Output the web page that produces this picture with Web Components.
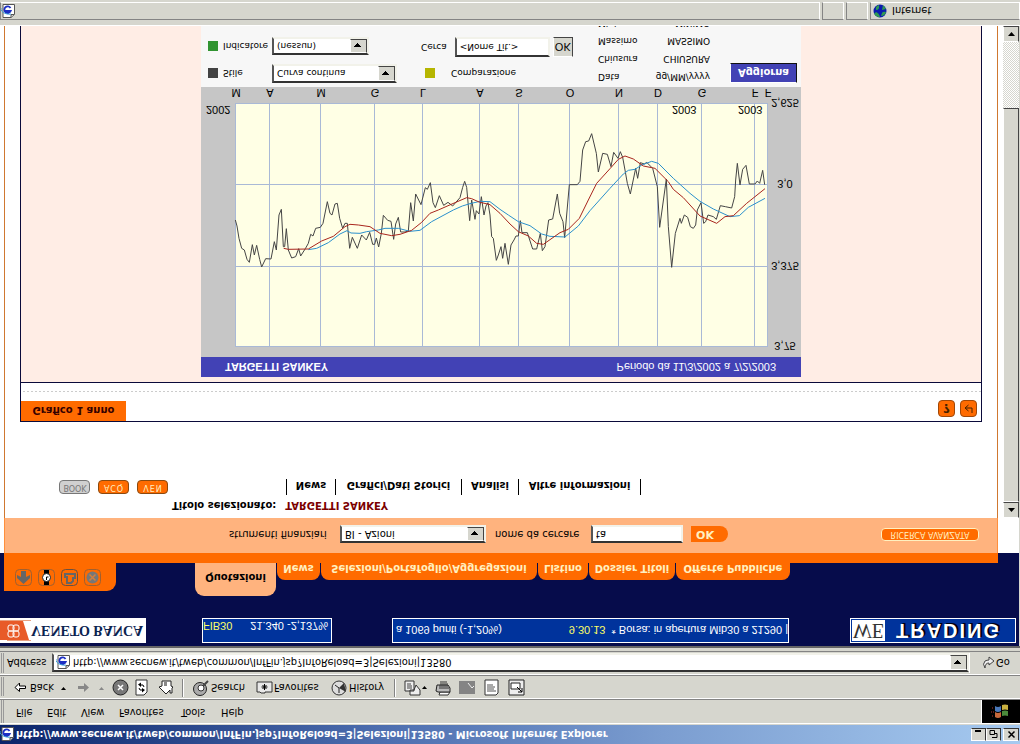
<!DOCTYPE html>
<html lang="it">
<head>
<meta charset="utf-8">
<title>InfFin - Microsoft Internet Explorer</title>
<style>
html,body{margin:0;height:100%}
body{background:#d6d6ce}
</style>
</head>
<body>
<browser-window></browser-window>
<script>
const base = `
*{box-sizing:border-box}
a{color:inherit;text-decoration:none}
button,input,select{font:inherit;color:inherit;margin:0;border-radius:0;outline:0}
`;
const fields = `
.sel{position:relative;display:block}
.sel select,.box{appearance:none;display:block;width:100%;height:100%;padding:0 3px;background:#fff;color:#000;border:2px solid;border-color:#848484 #f2f2ea #f2f2ea #848484;border-top-color:#333;border-left-color:#555}
.sel::after{content:"";position:absolute;right:2px;top:2px;bottom:2px;width:15px;border:1px solid;border-color:#fff #444 #444 #fff;background:linear-gradient(#000,#000) 3px 5px/7px 1px no-repeat,linear-gradient(#000,#000) 4px 6px/5px 1px no-repeat,linear-gradient(#000,#000) 5px 7px/3px 1px no-repeat,linear-gradient(#000,#000) 6px 8px/1px 1px no-repeat,#d6d6ce;pointer-events:none}
`;
function define(name, css, html){
  const t = document.createElement('template');
  t.innerHTML = `<style>${base}${css}</style>${html}`;
  customElements.define(name, class extends HTMLElement{
    constructor(){ super(); this.attachShadow({mode:'open'}).append(t.content.cloneNode(true)); }
  });
}

define('ie-page-icon', `:host{display:block;width:14px;height:14px}svg{display:block}`,
`<svg width="14" height="14" viewBox="0 0 14 14" aria-hidden="true"><path d="M2 .5h8l3.500 3v10h-11.500z" fill="#fff" stroke="#555"/><path d="M10 .5v3h3" fill="#ccc" stroke="#555"/><path d="M9.500 10a3.300 3.300 0 1 1 .2-3H3.500" fill="none" stroke="#1c2fc4" stroke-width="1.800"/><path d="M0 10C-1 5 8 3 10 4" fill="none" stroke="#3aa0d8"/></svg>`);

define('title-bar', `
:host{display:flex;align-items:center;height:19px;background:linear-gradient(90deg,#0a246a,#4e6fb0 38%,#7b9dd0 65%,#a6caf0);color:#fff;font:bold 11px "DejaVu Sans Condensed","DejaVu Sans",sans-serif;gap:2px;padding-right:1px}
h1{font:inherit;margin:0;flex:1;white-space:nowrap}
button{width:15px;height:13px;padding:0;background:#d6d6ce;border:1px solid;border-color:#fff #333 #333 #fff;display:grid;place-items:center}
button:last-child{width:16px}
.w{display:flex;gap:0}.w button:last-child{margin-left:2px}`,
`<ie-page-icon></ie-page-icon><h1>http://www.secnew.it/tweb/common/InfFin.jsp?InfoReload=3|Selezioni|13580 - Microsoft Internet Explorer</h1>
<div class="w"><button aria-label="Riduci"><svg width="9" height="9"><path d="M1 8h6" stroke="#000" stroke-width="2"/></svg></button><button aria-label="Ripristina"><svg width="9" height="9"><path d="M3 1.500h5v4h-2M1 4.500h4.500v4H1z" fill="none" stroke="#000"/></svg></button><button aria-label="Chiudi"><svg width="9" height="9"><path d="M1.500 1.500l6 6M7.500 1.500l-6 6" stroke="#000" stroke-width="1.500"/></svg></button></div>`);

define('menu-bar', `
:host{display:flex;height:25px;margin-top:1px;border-top:1px solid #fff;border-bottom:1px solid #848484;align-items:stretch}
nav{display:flex;flex:1;align-items:center;border-left:3px double #999;margin-left:1px;padding:0 0 2px 12px}
a{display:block}
.logo{width:39px;background:#000;border-left:1px solid #fff;display:grid;place-items:center}`,
`<nav><a href="#" style="width:31px">File</a><a href="#" style="width:34px">Edit</a><a href="#" style="width:38px">View</a><a href="#" style="width:62px">Favorites</a><a href="#" style="width:40px">Tools</a><a href="#">Help</a></nav>
<div class="logo"><svg width="22" height="18" viewBox="0 0 22 18" aria-hidden="true"><path d="M2 4h2M1 8h3M2 12h2" stroke="#a33" stroke-dasharray="1 1"/><path d="M5 3q3-2 6 0v5q-3-2-6 0z" fill="#c8683c"/><path d="M12 4q3 1 6 0v5q-3 1-6 0z" fill="#4b8a3c"/><path d="M5 9q3-2 6 0v5q-3-2-6 0z" fill="#4a78b8"/><path d="M12 10q3 1 6 0v5q-3 1-6 0z" fill="#c8b040"/></svg></div>`);

define('tool-bar', `
:host{display:flex;height:24px;border-top:1px solid #fff;border-bottom:1px solid #848484;align-items:center}
.b{display:flex;flex:1;align-items:center;border-left:3px double #999;margin-left:1px;height:19px;padding:0 0 2px 9px}
button{border:0;background:none;padding:0;display:flex;align-items:center;gap:1px;text-align:left}
svg{display:block;flex:none}
i{width:2px;height:18px;border-left:1px solid #848484;border-right:1px solid #fff}`,
`<div class="b">
<button style="width:48px"><svg width="16" height="13"><path d="M2 6.500L6.500 2.500v3h6v2.500h-6v3z" fill="#fff" stroke="#000"/></svg>Back</button>
<svg width="16" height="6"><path d="M0 1h5l-2.500 3z"/></svg>
<button style="width:30px" aria-label="Forward"><svg width="14" height="13"><path d="M1 5h6V2l5 4.500L7 11V8H1z" fill="#888"/></svg><svg width="14" height="6"><path d="M7 1h5L9.500 4z" fill="#888"/></svg></button>
<button style="width:27px;justify-content:center" aria-label="Stop"><svg width="17" height="17"><circle cx="8.500" cy="8.500" r="7.500" fill="#777" stroke="#222"/><path d="M6 6l5 5M11 6l-5 5" stroke="#fff" stroke-width="1.500"/></svg></button>
<button style="width:24px" aria-label="Refresh"><svg width="15" height="17"><path d="M2 1h8l3 3v12H2z" fill="#fff" stroke="#333"/><path d="M5 8q0-3 4-2M10 9q0 3-4 2" fill="none" stroke="#000"/><path d="M8 3.500l3 2.500-3 2zM7 9l-3 2.500 3 2z"/></svg></button>
<button style="width:24px" aria-label="Home"><svg width="17" height="17"><path d="M1 9l7-7 4 4V3h2v5l1 1-2 1v5H4v-5z" fill="#fff" stroke="#222"/><path d="M6 10v5h3v-5z" fill="#888"/></svg></button>
<i></i>
<button style="width:64px;margin-left:8px"><svg width="18" height="18"><circle cx="8" cy="8" r="6.500" fill="#aaa" stroke="#222"/><circle cx="9" cy="9" r="3" fill="#fff" stroke="#333"/><path d="M11 11l5 5" stroke="#444" stroke-width="2"/></svg>Search</button>
<button style="width:75px"><svg width="17" height="15"><path d="M1 3h3l1-1h4v1h7v10H1z" fill="#e8e8e8" stroke="#333"/><path d="M8.500 5v6M5.500 8h6M6.500 6l4 4M10.500 6l-4 4" stroke="#000"/></svg>Favorites</button>
<button style="width:63px"><svg width="17" height="17"><circle cx="8" cy="8" r="7" fill="#ddd" stroke="#333"/><path d="M8 8l7-4-2 9z" fill="#333"/><path d="M8 3v5l-4 3" fill="none" stroke="#222"/></svg>History</button>
<i></i>
<button style="width:31px;margin-left:8px" aria-label="Mail"><svg width="17" height="17"><path d="M1 5h9v10H1zM6 1h10v5l-4 5-2-5H6z" fill="#eee" stroke="#333"/><path d="M3 8h5M3 10h5M3 12h4" stroke="#444"/></svg><svg width="6" height="5"><path d="M0 1h5L2.500 4z"/></svg></button>
<button style="width:24px" aria-label="Print"><svg width="17" height="17"><path d="M4 1h9l2 3H5z" fill="#fff" stroke="#333"/><path d="M1 5l2-1h12v4l-2 3H2z" fill="#bbb" stroke="#222"/><path d="M4 8h10M4 10h9M5 12h8M5 14h7" stroke="#333"/></svg></button>
<button style="width:25px" aria-label="Edit"><svg width="17" height="15"><path d="M0 1h16v13H0z" fill="#848484"/><path d="M9 12l4-5 2 2" stroke="#eee" fill="none"/></svg></button>
<button style="width:24px" aria-label="Discuss"><svg width="16" height="17"><path d="M1 1h11l2 2v13H1z" fill="#fff" stroke="#333"/><path d="M3 5h9M3 7h7M3 9h8M3 11h6" stroke="#555"/></svg></button>
<button aria-label="Messenger"><svg width="17" height="17"><path d="M1 1h15v15H1z" fill="#eee" stroke="#222"/><path d="M3 7h9v6H3z" fill="#fff" stroke="#222"/><path d="M9 9l5-5M14 8V4h-4" fill="none" stroke="#000"/></svg></button>
</div>`);

define('address-bar', fields + `
:host{display:flex;height:24px;border-top:1px solid #fff;border-bottom:1px solid #848484;align-items:center}
.g{display:flex;flex:1;align-items:center;border-left:3px double #999;margin-left:1px;height:20px;padding-left:3px}
label{width:45px}
.sel{flex:1;height:19px}
.sel select{padding-left:19px}
.ic{position:absolute;left:4px;top:3px;z-index:1}
button{width:51px;border:0;border-left:1px solid #fff;background:none;padding:0 0 0 11px;display:flex;align-items:center;gap:1px;height:20px}`,
`<div class="g"><label for="a">Address</label><span class="sel"><ie-page-icon class="ic"></ie-page-icon><select id="a"><option>http://www.secnew.it/tweb/common/InfFin.jsp?InfoReload=3|Selezioni|13580</option></select></span></div>
<button><svg width="14" height="15"><path d="M4 2Q1 6 4 9q2 1 4 1v3l5-4-5-4v2Q4 7 4 2z" fill="#eee" stroke="#444" transform="matrix(1 0 0 1 0 0)"/></svg>Go</button>`);

define('status-bar', `
:host{display:flex;height:26px;padding:5px 0 3px;gap:2px;border-top:1px solid #fff}
div{border:1px solid;border-color:#848484 #fff #fff #848484;height:18px}
.m{flex:1;display:flex;align-items:center}.s{width:22px}
.z{width:150px;display:flex;align-items:center;gap:5px;padding-left:2px}`,
`<div class="m"><ie-page-icon></ie-page-icon></div><div class="s"></div><div class="s"></div>
<div class="z"><svg width="14" height="14" viewBox="0 0 14 14" aria-hidden="true"><circle cx="7" cy="7" r="6.500" fill="#0a1cae"/><path d="M1 4q3-4 6-3-1 4-4 5zM8 2q4 0 5 4-3 1-4-1zM3 8q4 0 3 5-4-1-3-5zM9 8l4 1-3 4z" fill="#2f9a52"/></svg><span>Internet</span></div>`);

define('nav-tab', `
:host{display:block;width:var(--w);height:17px;background:#ff6b00;border-radius:8px 8px 0 0;color:#fff0c0;line-height:23px;text-align:center;white-space:nowrap}
:host([current]){height:33px;background:#ffb37e;color:#000;line-height:38px;border-radius:9px 9px 0 0}`,
`<a href="#"><slot></slot></a>`);

define('trading-header', fields + `
:host{display:block;background:#fff;margin-right:1px;font:10px "DejaVu Sans",sans-serif;color:#000}
.top{background:#060c4b;margin-bottom:-10px;padding:3px 3px 10px 0}
.row{display:flex;align-items:flex-start;font:11px "Liberation Sans",Arial,sans-serif;color:#fff}
.bank{width:146px;height:25px;background:#fff;display:flex;align-items:center;color:#0b2350;font:bold 14px "Liberation Serif",serif;white-space:nowrap}
.bank svg{flex:none}
.q{height:25px;border:1px solid #fff;background:#00339c;display:flex;white-space:nowrap;overflow:hidden}
.fib{width:130px;margin-left:56px;align-items:flex-end;justify-content:space-between;padding-right:3px;line-height:13px}
.tick{width:397px;margin-left:60px;align-items:center;padding-left:3px}
.y{color:#ff6}
.tick .y{margin:0 6px 0 auto}
.me{margin-left:auto;width:166px;height:25px;border:1px solid #fff;background:#00339c;display:flex;align-items:center;padding-left:1px;font:bold 20px "Liberation Sans",Arial,sans-serif;text-shadow:2px 1px #001}
.me b{background:#fff;color:#333;font:20px/21px "Liberation Serif",serif;width:33px;height:21px;text-shadow:none;text-align:center;white-space:nowrap;margin-right:11px}
.me span{letter-spacing:2px}
.tabs{display:flex;align-items:flex-end;height:33px;margin-top:22px;font:bold 10px "DejaVu Sans",sans-serif;gap:1px}
.tools{width:112px;height:28px;margin:0 78px 0 4px;background:#ff6b00;border-radius:0 9px 0 0;display:flex;gap:6px;padding:5px 11px}
.tools button{border:0;padding:0;background:none;height:17px}
svg{display:block}
.bar{height:10px;background:#ff6b00;margin:0 21px 0 4px;position:relative}
.search{height:35px;margin:0 21px 0 4px;border:solid #ff8f3c;border-width:0 1px;background:#ffb37e;display:flex;align-items:center;padding:2px 18px 0 224px}
.search label{white-space:nowrap}
.l1{width:111px}.s1{width:146px;height:18px}.l2{margin-left:9px;width:96px}.i2{width:92px;height:18px}
.ok{margin-left:8px;width:37px;height:16px;border:0;border-radius:0 8px 8px 0;background:#ff6b00;color:#fff0c0;font:bold 11px "DejaVu Sans",sans-serif;padding:0 9px 0 0}
.adv{margin-left:auto;width:98px;height:13px;border:1px solid #fff0c0;border-radius:4px;background:#ff6b00;color:#fff0c0;font:8px/11px "DejaVu Sans",sans-serif;text-align:center;white-space:nowrap}`,
`<div class="top"><div class="row">
<div class="bank"><svg width="31" height="25" viewBox="0 0 31 25" aria-hidden="true"><path d="M7 2h24v1H7zM0 22h31v1H0z" fill="#e8a080"/><path d="M0 22V3h29l-6 19z" fill="#e85a28"/><g fill="none" stroke="#fff"><rect x="8" y="6" width="6" height="6" rx="2"/><rect x="13" y="6" width="6" height="6" rx="2"/><rect x="8" y="12" width="6" height="6" rx="2"/><rect x="13" y="12" width="6" height="6" rx="2"/></g></svg><span>VENETO BANCA</span></div>
<div class="q fib"><span class="y">FIB30</span><span>21.340 -2,137%</span></div>
<div class="q tick"><span>a 1069 punti (-1,20%)</span><span class="y">9.30.13</span><span>* Borsa: in apertura Mib30 a 21290 |</span></div>
<div class="me"><b>WE</b><span>TRADING</span></div></div>
<div class="tabs"><div class="tools">
<button aria-label="Scarica"><svg width="17" height="17"><rect x=".5" y=".5" width="16" height="16" rx="4" fill="none" stroke="#a06030"/><path d="M8.500 2L2 8v3l4-2v6h5V9l4 2V8z" fill="#666"/></svg></button>
<button aria-label="Orologio"><svg width="17" height="17"><rect x=".5" y=".5" width="16" height="16" rx="4" fill="none" stroke="#a06030"/><path d="M6 1h5v15H6z"/><circle cx="8.500" cy="8.500" r="4" fill="#fff" stroke="#222"/><path d="M8.500 6v3h2" fill="none" stroke="#000"/></svg></button>
<button aria-label="Stampa"><svg width="17" height="17"><rect x=".5" y=".5" width="16" height="16" rx="4" fill="none" stroke="#6b5040"/><path d="M6 3h4l2 2v3h2v4H4V9h2z" fill="none" stroke="#666" stroke-width="2"/></svg></button>
<button aria-label="Chiudi"><svg width="17" height="17"><rect x=".5" y=".5" width="16" height="16" rx="4" fill="none" stroke="#a06030"/><circle cx="8.500" cy="8.500" r="6" fill="#777"/><path d="M5.500 5.500l6 6M11.500 5.500l-6 6" stroke="#d08040" stroke-width="1.500"/></svg></button>
</div><nav-tab current style="--w:81px">Quotazioni</nav-tab><nav-tab style="--w:43px">News</nav-tab><nav-tab style="--w:216px">Selezioni/Portafoglio/Aggregazioni</nav-tab><nav-tab style="--w:50px">Listino</nav-tab><nav-tab style="--w:86px">Dossier Titoli</nav-tab><nav-tab style="--w:114px">Offerte Pubbliche</nav-tab></div></div>
<div class="bar"></div>
<div class="search"><label class="l1" for="t">strumenti finanziari</label><span class="sel s1"><select id="t"><option>BI - Azioni</option></select></span><label class="l2" for="n">nome da cercare</label><input class="box i2" id="n" value="ta"><button class="ok">OK</button><a class="adv" href="#">RICERCA AVANZATA</a></div>`);

define('scroll-bar', `
:host{display:flex;flex-direction:column;width:16px;background:repeating-conic-gradient(#fff 0 25%,#d6d6ce 0 50%) 0 0/2px 2px;flex:none}
button,div{border:1px solid;border-color:#fff #444 #444 #fff;background:#d6d6ce;padding:0;display:grid;place-items:center}
button{height:16px}div{height:80%}
.d{margin-top:auto}svg{display:block}`,
`<button aria-label="Su"><svg width="7" height="4"><path d="M3.500 0L7 4H0z"/></svg></button><div></div><button class="d" aria-label="Giu"><svg width="7" height="4"><path d="M0 0h7L3.500 4z"/></svg></button>`);

const months = [[34,'M'],[68,'A'],[119,'M'],[173,'G'],[221,'L'],[278,'A'],[317,'S'],[368,'O'],[417,'N'],[456,'D'],[500,'G'],[553,'F'],[566,'F']];
define('price-chart', `
:host{display:block;width:600px;font-weight:400}
.h{display:flex;justify-content:space-between;height:20px;padding:0 25px 0 24px;background:#4242b5;color:#fff;line-height:20px}
.h,svg{font-family:"Liberation Sans",Arial,sans-serif;font-size:11px}
svg{display:block;background:#c6c6c6}
polyline{fill:none;stroke-width:3}`,
`<div class="h"><b>TARGETTI SANKEY</b><span>Periodo da 11/3/2002 a 7/2/2003</span></div>
<svg width="600" height="270" viewBox="0 0 600 270">
<rect x="34.500" y="10.500" width="532" height="243" fill="#ffffe5" stroke="#a9b9d6"/>
<path d="M34 90.500h532M34 172.500h532${months.slice(1,-1).map(m=>`M${m[0]+.5} 11v242`).join('')}" stroke="#a9b9d6" fill="none"/>
<g transform="matrix(.33333 0 0 -.33333 24 257)">
<polyline stroke="#444" points="31,360 36,378 42,415 50,445 58,450 66,478 73,487 82,434 88,465 95,436 104,478 110,501 122,476 138,477 148,425 154,450 162,345 169,328 175,440 179,440 184,386 190,450 200,474 212,470 221,446 227,468 241,446 250,430 257,403 264,408 272,385 286,382 294,370 307,305 315,340 321,345 330,312 337,310 344,355 353,385 360,370 367,370 374,445 382,412 397,445 410,405 424,420 434,397 443,433 449,433 454,414 461,441 469,400 475,346 488,361 498,364 506,418 512,372 520,352 527,396 540,396 550,393 557,308 565,363 572,282 588,314 601,263 607,268 616,248 624,308 631,323 643,287 656,316 669,307 683,318 705,293 713,262 719,244 725,262 734,362 740,300 750,358 754,332 762,342 769,290 777,345 783,318 789,308 795,345 800,410 805,415 814,481 820,465 828,440 833,475 840,430 850,493 858,435 867,420 873,408 880,408 886,362 891,398 907,398 923,447 935,447 946,400 952,452 960,440 971,360 983,357 997,282 1004,340 1014,365 1019,413 1033,254 1057,254 1065,244 1073,150 1082,125 1091,123 1100,101 1114,160 1120,216 1133,160 1147,163 1158,200 1166,157 1179,175 1186,155 1193,172 1200,210 1207,250 1216,282 1232,205 1238,235 1246,188 1258,192 1265,187 1283,205 1297,260 1304,382 1324,237 1330,380 1340,502 1351,400 1365,355 1369,370 1378,345 1388,352 1396,380 1405,385 1412,375 1417,330 1428,308 1436,370 1442,365 1449,345 1465,350 1474,358 1486,317 1501,320 1520,324 1529,290 1532,240 1537,190 1545,255 1553,208 1563,196 1573,252 1590,252 1597,243 1604,250 1613,211 1619,254"/>
<polyline stroke="#2a90cc" points="250,449 275,445 310,428 345,402 366,392 378,399 405,400 425,395 460,390 480,385 520,385 555,394 585,391 620,365 685,330 712,318 735,311 765,304 795,305 825,328 850,345 880,365 915,377 950,402 975,409 1020,411 1060,378 1095,332 1155,265 1195,222 1210,211 1230,208 1250,195 1280,184 1300,190 1345,235 1395,280 1425,304 1465,327 1515,350 1543,347 1570,322 1620,295"/>
<polyline stroke="#a8241c" points="176,445 190,448 250,447 290,423 325,409 360,380 375,373 400,375 435,380 465,400 500,407 525,403 560,391 590,367 615,340 640,330 690,308 725,293 740,296 762,306 795,314 825,340 855,372 880,395 910,408 935,430 955,433 1005,398 1030,388 1063,355 1090,300 1115,250 1155,206 1180,178 1200,168 1225,177 1255,198 1290,205 1330,245 1345,268 1375,293 1425,348 1475,370 1500,350 1525,347 1565,310 1620,266"/>
</g>
<g text-anchor="middle">${months.map(m=>`<text x="${m[0]+1}" y="268">${m[1]}</text>`).join('')}</g>
<text x="5" y="251">2002</text><text x="471" y="251">2003</text><text x="537" y="251">2003</text>
<g text-anchor="middle"><text x="584" y="15">3,75</text><text x="584" y="95">3,375</text><text x="584" y="177">3,0</text><text x="584" y="258">2,625</text></g>
</svg>`);

define('chart-controls', fields + `
:host{display:grid;grid-template-columns:400px 129px 1fr;align-items:start;width:600px;background:#f7f7f7;font:9px "DejaVu Sans",sans-serif;color:#000;padding-top:4px}
.f{display:grid;grid-template-columns:11px 45px auto;column-gap:4px;row-gap:8px;padding-left:7px;width:220px;align-items:center;grid-auto-rows:19px}
.a{display:flex}
.sq{width:10px;height:10px}
.w1{width:125px;height:19px}.w2{width:97px;height:18px}.w3{width:125px;height:19px}
.c{display:flex;align-items:center;height:19px}
.cc{display:grid;row-gap:7px;align-content:start}
.c .box{width:95px;height:20px;margin-left:8px}
.c button{margin-left:3px;width:20px;height:20px;background:#d6d6ce;border:1px solid;border-color:#fff #444 #444 #fff;padding:0;font:11px "Liberation Sans",sans-serif}
.v{display:grid;grid-template-columns:50px 62px;row-gap:6px;line-height:12px;margin:0 0 0 -3px}
.v b{font-weight:400}
.v span{text-align:right}
.go{width:67px;height:20px;background:#4242b5;color:#fff;border:1px solid;border-color:#fff #111 #111 #fff;font:bold 10px "DejaVu Sans",sans-serif;padding:0}`,
`<div class="a"><div class="f">
<i class="sq" style="background:#424242"></i><label for="s">Stile</label><span class="sel w1"><select id="s"><option>Curva continua</option></select></span>
<i class="sq" style="background:#319431"></i><label for="i">Indicatore</label><span class="sel w2"><select id="i"><option>(nessun)</option></select></span>
<i></i><i></i><i></i></div>
<div class="cc"><div class="c" style="margin-left:4px"><i class="sq" style="background:#b5b500;margin-right:16px"></i>Comparazione</div>
<div class="c"><label for="x">Cerca</label><input class="box" id="x" value="&lt;Nome Tit.&gt;"><button>OK</button></div></div></div>
<div class="v"><b>Data</b><span>gg/MM/yyyy</span><b>Chiusura</b><span>CHIUSURA</span><b>Massimo</b><span>MASSIMO</span><b>Minimo</b><span>MINIMO</span></div>
<button class="go">Aggiorna</button>`);

define('quote-page', `
:host{display:block;flex:1;min-width:0;background:#fff;overflow:hidden;font:bold 10px "DejaVu Sans",sans-serif;color:#000}
.page{margin:0 5px 0 4px;border:solid #d07830;border-width:0 1px;min-height:100%;padding:5px 15px 0}
h2{font:inherit;line-height:16px;margin:0 0 2px 152px;display:flex;gap:9px}
h2 b{color:#7b0000}
.row{display:flex;align-items:center;height:16px}
.row button{width:31px;height:14px;border:1px solid #8a4a10;border-radius:4px;background:#ff6b00;color:#fff0c0;font:8px/10px "DejaVu Sans",sans-serif;letter-spacing:1px;padding:0 0 0 1px;margin-right:8px}
.row button:first-child{background:#d0d0d0;border-color:#777;color:#777;margin-left:39px;letter-spacing:0}
nav{display:flex;margin-left:110px;border-left:1px solid #000}
nav a{line-height:20px;height:16px;border-right:1px solid #000;text-align:center;white-space:nowrap}
section{margin-top:57px;border:1px solid #0a0a3a;border-bottom:0}
header{display:flex;justify-content:space-between;height:39px;border-bottom:1px solid #0a0a3a;background:linear-gradient(90deg,#ccc 50%,#fff 50%) 2px 29px/4px 1px repeat-x}
h3{margin:0;width:105px;height:20px;background:#ff6b00;color:#300;font:bold 10px/21px "DejaVu Sans",sans-serif;text-align:center}
.ib{display:flex;gap:5px;padding:4px 4px 0 0}
.ib button{width:17px;height:17px;border:1px solid #a04808;border-radius:4px;background:#ff6b00;color:#420;padding:0;font:bold 12px "DejaVu Sans",sans-serif;display:grid;place-items:center}
.body{background:#ffede5;padding:5px 0 120px;display:grid;justify-content:center}`,
`<div class="page"><h2>Titolo selezionato: <b>TARGETTI SANKEY</b></h2>
<div class="row"><button>BOOK</button><button>ACQ</button><button>VEN</button>
<nav><a href="#" style="width:49px">News</a><a href="#" style="width:126px">Grafici/Dati Storici</a><a href="#" style="width:57px">Analisi</a><a href="#" style="width:122px">Altre informazioni</a></nav></div>
<section><header><h3>Grafico 1 anno</h3><div class="ib"><button aria-label="Aiuto">?</button><button aria-label="Indietro"><svg width="11" height="11"><path d="M9 1v5H3M5.500 3L2 6l3.500 3" fill="none" stroke="#420"/></svg></button></div></header>
<div class="body"><price-chart></price-chart><chart-controls></chart-controls></div></section></div>`);

define('browser-window', `
:host{display:flex;flex-direction:column;height:100%;min-height:600px;transform:scaleY(-1);background:#d6d6ce;font:11px "DejaVu Sans Condensed","DejaVu Sans",sans-serif;color:#000;overflow:hidden}
main{flex:1;min-height:0;display:flex;flex-direction:column;margin-top:3px;border-top:2px solid #666}
.frame{flex:1;min-height:0;display:flex;margin-right:1px}`,
`<title-bar></title-bar><menu-bar></menu-bar><tool-bar></tool-bar><address-bar></address-bar>
<main><trading-header></trading-header><div class="frame"><quote-page></quote-page><scroll-bar></scroll-bar></div></main><status-bar></status-bar>`);
</script>
</body>
</html>
